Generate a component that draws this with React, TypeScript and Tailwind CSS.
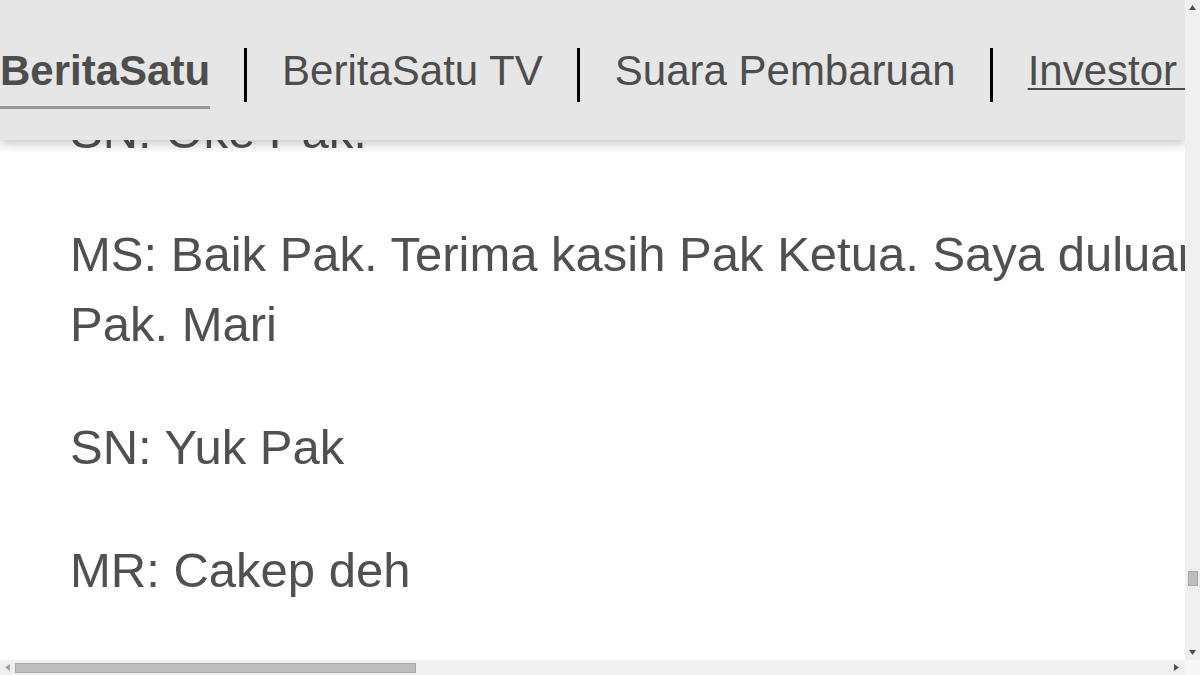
const paragrafos = [
    "SN: Oke Pak.",
    "MS: Baik Pak. Terima kasih Pak Ketua. Saya duluan\nPak. Mari",
    "SN: Yuk Pak",
    "MR: Cakep deh",
    "SN: Iya Pak",
]

function Separador() {
    return <div className="ml-[34px] mr-[35px] mt-[1px] h-[54px] w-[3px] shrink-0 bg-black" />
}

function ScrollVertical() {
    return (
        <div className="flex w-[15px] shrink-0 flex-col items-center bg-[#f0f0f0]">
            <svg width="7" height="5" viewBox="0 0 7 5" className="mt-[5px]">
                <polygon points="3.5,0 7,5 0,5" fill="#505050" />
            </svg>
            <div className="flex-1" />
            <div className="mb-[64px] h-[15px] w-[10px] border border-[#a8a8a8] bg-[#bdbdbd]" />
            <svg width="7" height="5" viewBox="0 0 7 5" className="mb-[5px]">
                <polygon points="0,0 7,0 3.5,5" fill="#505050" />
            </svg>
        </div>
    )
}

function ScrollHorizontal() {
    return (
        <div className="flex h-[15px] shrink-0">
            <div className="flex flex-1 items-center bg-[#f0f0f0]">
                <svg width="5" height="7" viewBox="0 0 5 7" className="ml-[5px]">
                    <polygon points="5,0 5,7 0,3.5" fill="#a0a0a0" />
                </svg>
                <div className="ml-[5px] h-[10px] w-[401px] border border-[#a8a8a8] bg-[#bdbdbd]" />
                <div className="flex-1" />
                <svg width="5" height="7" viewBox="0 0 5 7" className="mr-[6px]">
                    <polygon points="0,0 5,3.5 0,7" fill="#505050" />
                </svg>
            </div>
            <div className="w-[15px] bg-[#f7f7f7]" />
        </div>
    )
}

export default function App() {
    return (
        <div className="flex h-[675px] w-[1200px] flex-col overflow-hidden bg-white font-['Liberation_Sans',Arial,sans-serif]">
            <div className="flex min-h-0 flex-1">
                <div className="relative min-w-0 flex-1 overflow-hidden">
                    <header className="absolute inset-x-0 top-0 z-10 h-[140px] bg-[#e6e6e6] shadow-[0_4px_10px_rgba(0,0,0,0.22)]">
                        <nav className="flex items-start whitespace-nowrap pt-[47px] text-[42px] leading-[48px] text-[#4d4d4d]">
                            <a className="shrink-0 border-b-[3px] border-[#999999] pb-[11px] font-bold">BeritaSatu</a>
                            <Separador />
                            <a className="shrink-0">BeritaSatu TV</a>
                            <Separador />
                            <a className="shrink-0">Suara Pembaruan</a>
                            <Separador />
                            <a className="shrink-0 underline decoration-2 underline-offset-[3px]">Investor Daily</a>
                        </nav>
                    </header>

                    <article className="w-[3400px] pl-[70px] pt-[96px] text-[49px] leading-[70px] text-[#505050]">
                        {paragrafos.map((texto) => (
                            <p key={texto} className="mb-[53px] whitespace-pre">
                                {texto}
                            </p>
                        ))}
                    </article>
                </div>
                <ScrollVertical />
            </div>
            <ScrollHorizontal />
        </div>
    )
}
